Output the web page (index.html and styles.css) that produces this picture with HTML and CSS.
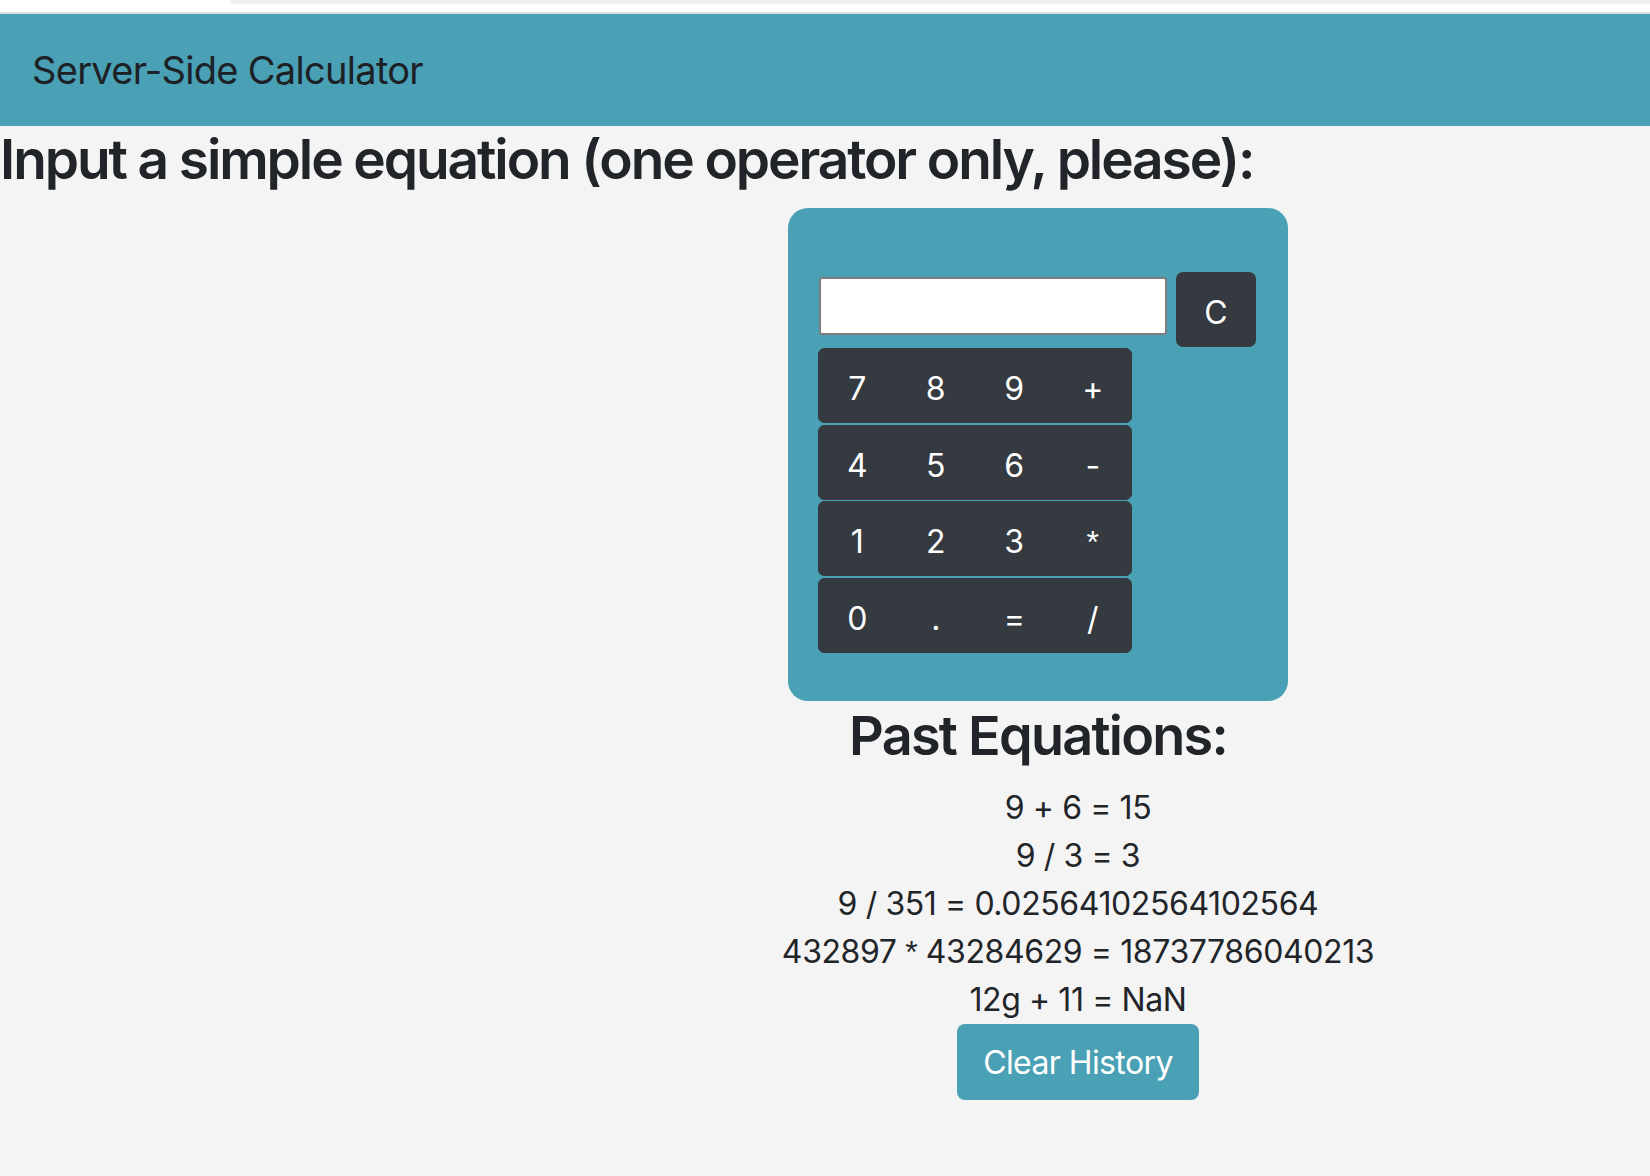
FILE: index.html
```html
<!DOCTYPE html>
<html lang="en">
<head>
<meta charset="utf-8">
<title>Server-Side Calculator</title>
<link rel="stylesheet" href="styles.css">
</head>
<body>
<div class="chrome"><div class="chrome-tab"></div></div>
<nav class="navbar"><span class="brand">Server-Side Calculator</span></nav>
<h2 class="prompt">Input a simple equation (one operator only, please):</h2>
<div class="calc-col">
  <div class="calc">
    <div class="top-row">
      <input class="display" type="text">
      <button class="clear">C</button>
    </div>
    <div class="keys">
      <div class="key-row"><button class="key">7</button><button class="key">8</button><button class="key">9</button><button class="key">+</button></div>
      <div class="key-row"><button class="key">4</button><button class="key">5</button><button class="key">6</button><button class="key">-</button></div>
      <div class="key-row"><button class="key">1</button><button class="key">2</button><button class="key">3</button><button class="key"><span class="ast">*</span></button></div>
      <div class="key-row"><button class="key">0</button><button class="key">.</button><button class="key">=</button><button class="key">/</button></div>
    </div>
  </div>
  <h2 class="past-title">Past Equations:</h2>
  <div class="history">
    <ul class="eq-list">
      <li>9 + 6 = 15</li>
      <li>9 / 3 = 3</li>
      <li>9 / 351 = 0.02564102564102564</li>
      <li>432897 <span class="ast">*</span> 43284629 = 18737786040213</li>
      <li>12g + 11 = NaN</li>
    </ul>
    <button class="clear-history">Clear History</button>
  </div>
</div>
</body>
</html>
```
FILE: styles.css
```css
* { box-sizing: border-box; }
html, body { margin: 0; padding: 0; }
body {
  background: #f4f4f4;
  color: #212529;
  font-family: Inter, "Noto Sans", "Liberation Sans", sans-serif;
  font-size: 32px;
  line-height: 48px;
}
.ast {
  font-family: "Liberation Sans", Arial, sans-serif;
}
.chrome {
  height: 14px;
  background: #ffffff;
  border-bottom: 2px solid #dcdce1;
  display: flex;
  justify-content: flex-end;
}
.chrome-tab {
  width: calc(100% - 230px);
  height: 4px;
  background: #f0f1f3;
  border-bottom-left-radius: 5px;
}
.navbar {
  background: #4aa0b4;
  height: 112px;
  padding: 16px 32px;
}
.brand {
  display: block;
  padding: 10px 0;
  font-size: 38px;
  line-height: 60px;
  letter-spacing: -0.7px;
  color: #1d2126;
}
.prompt {
  margin: 0 0 16px;
  font-size: 55px;
  line-height: 1.2;
  font-weight: 600;
  letter-spacing: -2.1px;
}
.calc-col {
  margin-left: 788px;
  width: 500px;
}
.calc {
  background: #4aa0b4;
  border-radius: 20px;
  padding: 64px 32px 48px 30px;
}
.top-row {
  display: flex;
  gap: 9px;
  align-items: flex-start;
}
.display {
  width: 348px;
  height: 58px;
  margin: 5px 0 0 1px;
  border: 2px solid #7d7d7d;
  border-radius: 3px;
  background: #ffffff;
  font-size: 32px;
}
.clear, .key {
  font-family: inherit;
  font-size: 32px;
  color: #ffffff;
  border: none;
  background: #343a40;
  padding: 6px 0 0;
}
.clear {
  width: 80px;
  height: 75px;
  border-radius: 7px;
}
.keys {
  width: 314px;
  margin-top: 1px;
  display: flex;
  flex-direction: column;
  gap: 1.5px;
}
.key-row {
  display: flex;
  height: 75px;
  background: #343a40;
  border-radius: 7px;
  overflow: hidden;
}
.key {
  flex: 1;
  height: 75px;
}
.past-title {
  margin: 3px 0 16px;
  text-align: center;
  font-size: 54px;
  line-height: 1.2;
  font-weight: 600;
  letter-spacing: -1.75px;
}
.history {
  padding-left: 80px;
  display: flex;
  flex-direction: column;
  align-items: center;
}
.eq-list {
  list-style: none;
  margin: 0;
  padding: 0;
  display: flex;
  flex-direction: column;
  align-items: center;
  white-space: nowrap;
  letter-spacing: -0.4px;
}
.clear-history {
  width: 242px;
  height: 76px;
  background: #4aa0b4;
  color: #ffffff;
  border: none;
  border-radius: 8px;
  font-family: inherit;
  font-size: 32px;
  letter-spacing: -0.6px;
  padding: 0;
}
```
